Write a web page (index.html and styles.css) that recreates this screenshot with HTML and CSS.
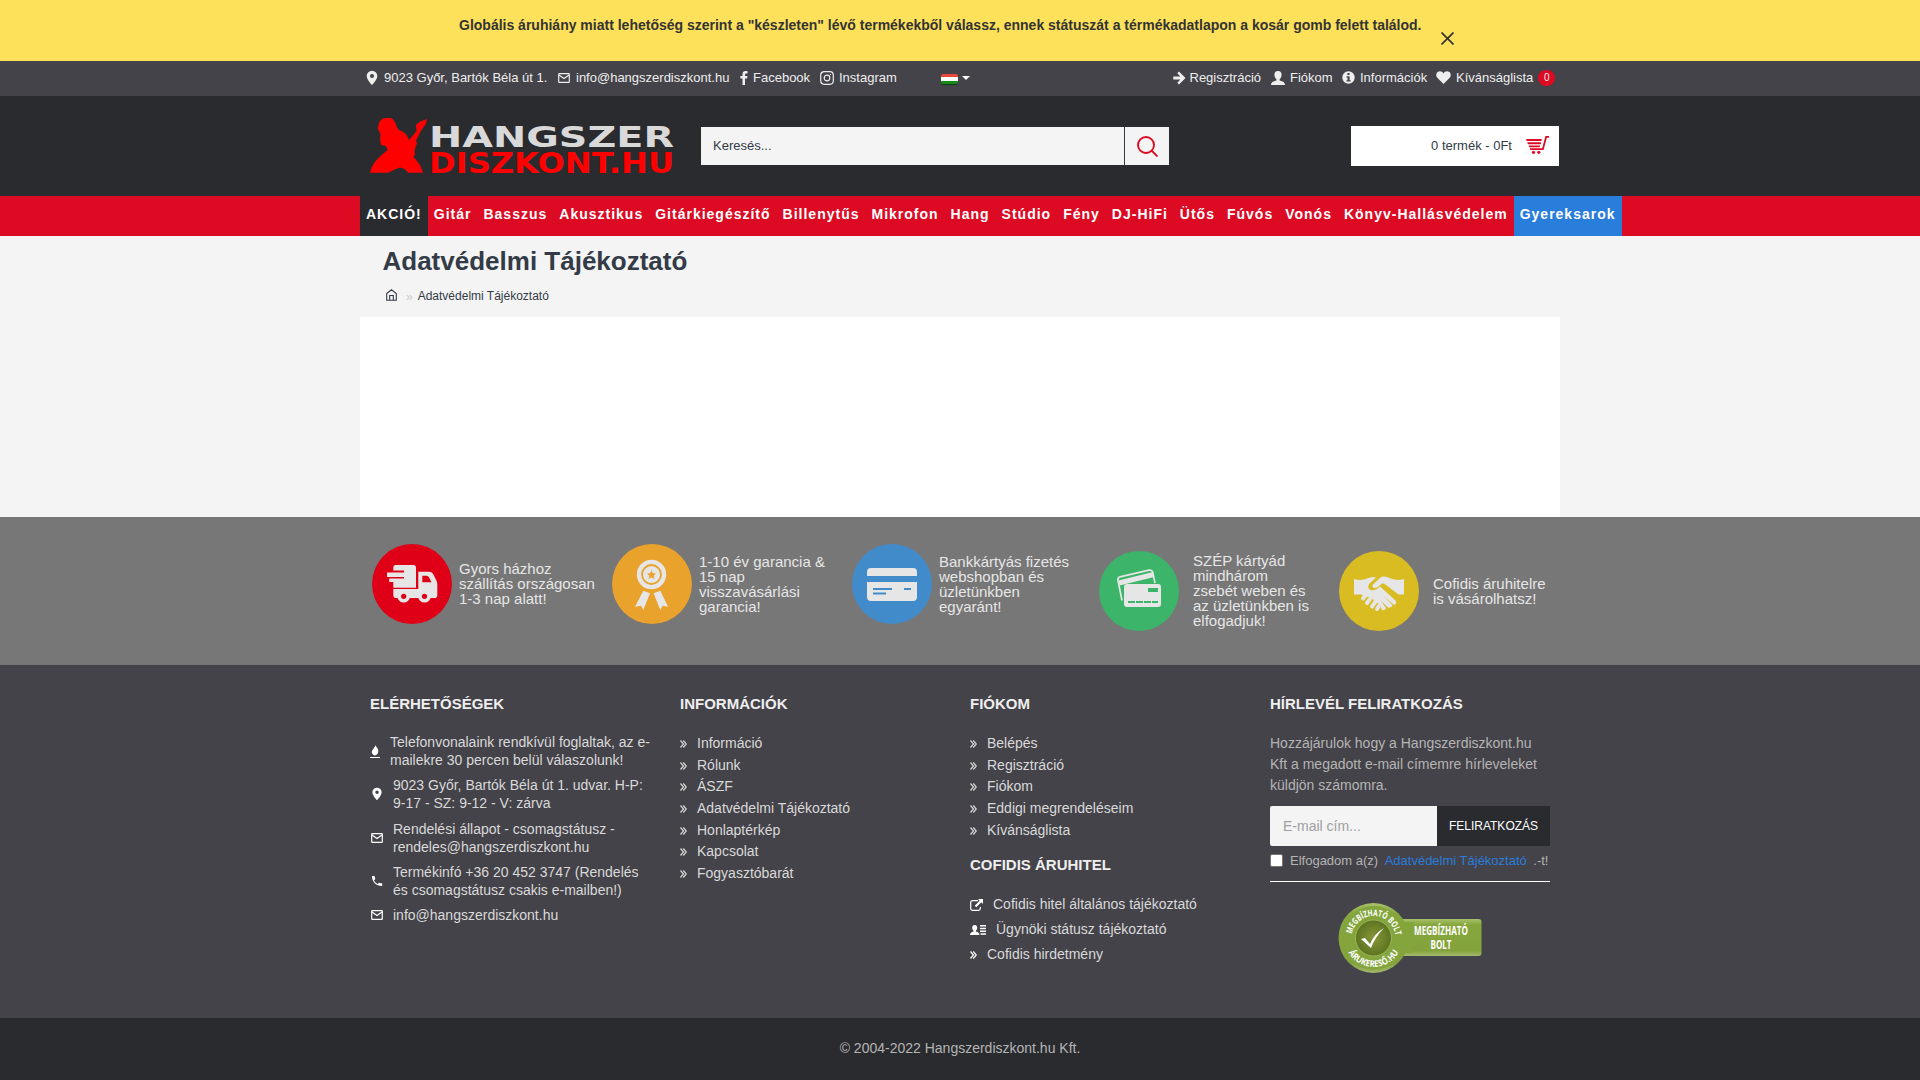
FILE: index.html
```html
<!DOCTYPE html>
<html lang="hu">
<head>
<meta charset="utf-8">
<title>Adatvédelmi Tájékoztató</title>
<link rel="stylesheet" href="styles.css">
</head>
<body>
<svg class="defs" aria-hidden="true">
  <symbol id="pin" viewBox="0 0 12 16"><path fill-rule="evenodd" d="M6 .8a5.300 5.300 0 0 0-5.300 5.300C.7 9.700 6 15.200 6 15.200s5.300-5.500 5.300-9.100A5.300 5.300 0 0 0 6 .8zm0 3.300a2 2 0 1 1 0 4 2 2 0 0 1 0-4z"/></symbol>
  <symbol id="mail" viewBox="0 0 12 10"><rect x=".7" y=".7" width="10.600" height="8.600" rx=".6" fill="none" stroke="currentColor" stroke-width="1.200"/><path d="M1 2l5 3.500L11 2" fill="none" stroke="currentColor" stroke-width="1.200"/></symbol>
  <symbol id="user" viewBox="0 0 16 16"><path d="M8 1c-2.500 0-3.600 1.700-3.600 3.700 0 2.200 1 3.600 2 4.300v1.500C3 11.300 1 12.300 1 15h14c0-2.700-2-3.700-5.400-4.500V9c1-.7 2-2.100 2-4.300C11.600 2.700 10.500 1 8 1z"/></symbol>
  <symbol id="chev" viewBox="0 0 7 8"><path d="M.5.5L3.500 4 .5 7.500M3.300.5L6.300 4l-3 3.500" fill="none" stroke="currentColor" stroke-width="1.200"/></symbol>
</svg>

<div class="notice">
  <strong>Globális áruhiány miatt lehetőség szerint a "készleten" lévő termékekből válassz, ennek státuszát a térmékadatlapon a kosár gomb felett találod.</strong>
  <svg class="close" viewBox="0 0 13 13"><path d="M.5.5l12 12M12.500.5l-12 12" stroke="#333" stroke-width="1.700"/></svg>
</div>

<div class="topbar"><div class="wrap top-row">
  <a class="t-pin"><svg width="12" height="16"><use href="#pin"/></svg>9023 Győr, Bartók Béla út 1.</a>
  <a class="t-mail"><svg width="12" height="10"><use href="#mail"/></svg>info@hangszerdiszkont.hu</a>
  <a class="t-fb"><svg width="8" height="14" viewBox="0 0 8 14"><path d="M7.500.2v2.300H6.200C5.300 2.500 5 3 5 3.700V5h2.400l-.3 2.400H5V14H2.500V7.400H.4V5h2.100V3.300C2.500 1.200 3.800.1 5.600.1c.9 0 1.600 0 1.900.1z"/></svg>Facebook</a>
  <a class="t-ig"><svg class="line" width="14" height="14" viewBox="0 0 14 14" stroke="currentColor" stroke-width="1.200"><rect x=".7" y=".7" width="12.600" height="12.600" rx="3.500"/><circle cx="7" cy="7" r="2.800"/><path d="M10 3.500h1"/></svg>Instagram</a>
  <a class="t-lang"><span class="flag"></span><span class="caret"></span></a>
  <a class="t-reg"><svg width="13" height="14" viewBox="0 0 13 14"><path d="M6 .6L12.500 7 6 13.400 4.300 11.700 7.400 8.500H.3v-3h7.100L4.300 2.300z"/></svg>Regisztráció</a>
  <a class="t-user"><svg width="16" height="16"><use href="#user"/></svg>Fiókom</a>
  <a class="t-info"><svg width="13" height="13" viewBox="0 0 13 13"><circle cx="6.500" cy="6.500" r="6.200"/><path fill="#444349" d="M5.400 2h2.200v2H5.400zM4.500 5.200h3.100v4h1v1.400H4.500V9.200h1V6.500h-1z"/></svg>Információk</a>
  <a class="t-heart"><svg width="15" height="13" viewBox="0 0 15 13"><path d="M7.500 13L1.300 6.800C-.3 5 0 2.200 1.700.9 3.600-.5 6.300.1 7.500 2.400 8.700.1 11.400-.5 13.300.9c1.700 1.300 2 4.100.4 5.900z"/></svg>Kívánságlista<b class="count">0</b></a>
</div></div>

<header class="header"><div class="wrap head-row">
  <svg class="logo" viewBox="0 0 306 66">
    <path fill="#f00" d="M7.700 11.300L9 6q2-4.500 6-5h6q4 2 5.700 8.700l2 3.300 4 1.500 4 3.500 2.600 5 7.400-9.300-1-5.700 4.600-3.500 6.700-2.500-1.200 5-5 7-4.800 9.700 1 2.600-1.500 4-1.200 4.400 1 2.500-2 2.500 2.700 3 4 5.300 3 7.700H38.300l-4-4-4.300-1.300-6 2.300-5.700 3H0q1-6 5-11 5-6 12.700-11.700l-2-4-4.700-1-1-6 .5-5z"/>
    <text x="59" y="29.700" font-size="28" fill="#d9d9d9" textLength="245" lengthAdjust="spacingAndGlyphs">HANGSZER</text>
    <text x="59" y="55.700" font-size="27.500" fill="#f00" textLength="245" lengthAdjust="spacingAndGlyphs">DISZKONT.HU</text>
  </svg>
  <div class="search"><span>Keresés...</span><button><svg class="line" width="21" height="21" viewBox="0 0 21 21" stroke="#dc0a23" stroke-width="1.900"><circle cx="9" cy="9" r="8"/><path d="M14.500 14.500l6 6"/></svg></button></div>
  <div class="cart">0 termék - 0Ft<svg width="23" height="18" viewBox="0 0 23 18"><path d="M23 0v1.700h-2.200L17.600 14H4.300l-.5-1.700h12.400L19.400 0zM0 3h15.800l-.4 2H.7zM1.200 6.300h14l-.5 2H2zM2.600 9.500h11.500l-.4 1.700H3.200z" fill="#dc0a23"/><circle cx="7.500" cy="16.300" r="1.600" fill="#dc0a23"/><circle cx="12.800" cy="16.300" r="1.600" fill="#dc0a23"/></svg></div>
</div></header>

<nav class="nav"><div class="wrap nav-row">
  <a class="dark">AKCIÓ!</a><a>Gitár</a><a>Basszus</a><a>Akusztikus</a><a>Gitárkiegészítő</a><a>Billenytűs</a><a>Mikrofon</a><a>Hang</a><a>Stúdio</a><a>Fény</a><a>DJ-HiFi</a><a>Ütős</a><a>Fúvós</a><a>Vonós</a><a>Könyv-Hallásvédelem</a><a class="blue">Gyereksarok</a>
</div></nav>

<main class="wrap">
  <h1>Adatvédelmi Tájékoztató</h1>
  <div class="crumbs"><svg class="line" width="11" height="12" viewBox="0 0 11 12" stroke="currentColor" stroke-width="1.100"><path d="M.7 4.500L5.500.8l4.800 3.700v6.700H.7zM3.700 11V6.500h3.600V11"/></svg><i>»</i><span>Adatvédelmi Tájékoztató</span></div>
  <div class="content"></div>
</main>

<section class="features"><div class="wrap feat-row">
  <div class="feat"><div class="disc red"><svg viewBox="0 0 80 80"><path d="M21.300 25v-1.500q0-2.500 2.500-2.500h17.500q2.700 0 2.700 2.700v20H21.300V38H17.200v-3.500H32V33H15v-4.500h17V26.500H21.300z"/><path fill-rule="evenodd" d="M46.300 27.700H57q3 0 4.500 3l3 6q.8 1.500.8 3.500v11q0 2.800-2.800 2.800H24q-2.700 0-2.700-2.700V45h25zm4 4v6.600H59.500l-2.500-5q-.8-1.600-2.500-1.600z"/><circle cx="31.700" cy="52.300" r="6.300"/><circle cx="52.500" cy="52.300" r="6.300"/><g fill="#df0018"><circle cx="31.700" cy="52.300" r="2.600"/><circle cx="52.500" cy="52.300" r="2.600"/></g></svg></div><p>Gyors házhoz<br>szállítás országosan<br>1-3 nap alatt!</p></div>
  <div class="feat"><div class="disc orange"><svg viewBox="0 0 80 80"><circle cx="39.500" cy="30.500" r="14.700"/><circle cx="39.500" cy="30.500" r="9.500" fill="none" stroke="#e9a22b" stroke-width="1.800"/><path fill="#e9a22b" d="M39.500 26l1.300 3.200 3.300.3-2.500 2.200.8 3.300-2.900-1.800-2.900 1.800.8-3.300-2.500-2.200 3.300-.3z"/><path d="M31.300 46.700l6.700 2.600L31.300 66 29 61.700l-6 1zM48.300 46.700l-6.700 2.600L48.300 66l2.300-4.300 5.500 1z"/></svg></div><p>1-10 év garancia &amp;<br>15 nap<br>visszavásárlási<br>garancia!</p></div>
  <div class="feat"><div class="disc azure"><svg viewBox="0 0 80 80"><path d="M15 32v-4q0-4 4-4h42q4 0 4 4v4zM15 38h50v15q0 4-4 4H19q-4 0-4-4z"/><path d="M21 45h19M21 49.500h13M52 45h7" stroke="#428bca" stroke-width="2"/></svg></div><p>Bankkártyás fizetés<br>webshopban és<br>üzletünkben<br>egyaránt!</p></div>
  <div class="feat low odd"><div class="disc green"><svg viewBox="0 0 80 80"><path d="M23 49.500l-4-20q-.5-3 2-3.700l29-6.600q3-.6 3.700 2l2.300 11" fill="none" stroke="#e6e6e6" stroke-width="1.700"/><path d="M19.500 29.500l34.500-8.500 1.200 5-34.500 8.500z"/><rect x="25" y="33" width="37" height="23" rx="3"/><path fill="#3cb469" d="M49 37h10v4H49z"/><path d="M29 51h30" stroke="#3cb469" stroke-width="2" stroke-dasharray="7 1"/></svg></div><p>SZÉP kártyád<br>mindhárom<br>zsebét weben és<br>az üzletünkben is<br>elfogadjuk!</p></div>
  <div class="feat low"><div class="disc yellow"><svg viewBox="0 0 80 80"><path d="M15 28q8 2.500 16-1.500 3-1 6 0l-6.500 6q-3 4 1 6.500 4 1.500 9.500-3.500l15.500 14q2 3-1.500 4.500L44.500 45l9 9q-1 3.500-4.500 2.500l-7-6.500 5 7q-1 3-4 2-2.500-7-8-9-3-5-8-4l-5-2.500h-7z"/><path d="M65 28q-8 2.500-16-1.500-5-2-8 .5l-7.500 7q-.5 3 2 3 3 0 7.500-4.500h2L59.500 43.500H65z"/><path d="M26 45l-2 2.500M31 48l-3 4M36 51.500l-3 4M40 55l-2 3" stroke="#e6e6e6" stroke-width="4" stroke-linecap="round"/></svg></div><p>Cofidis áruhitelre<br>is vásárolhatsz!</p></div>
</div></section>

<footer class="footer"><div class="wrap foot-row">
  <section class="contact">
    <h3>ELÉRHETŐSÉGEK</h3>
    <a class="first"><svg width="10" height="13" viewBox="0 0 10 13"><path d="M5.500 0c.3 2 2.800 3 2.800 6S6.500 10 5 10.500C3 10 1.500 8.500 1.800 6.500 2 5 4 4 4 2.500c.8 0 1-.9 1.500-2.500zM0 12h10v1H0z"/></svg><span>Telefonvonalaink rendkívül foglaltak, az e-<br>mailekre 30 percen belül válaszolunk!</span></a>
    <a><svg width="12" height="14"><use href="#pin"/></svg><span>9023 Győr, Bartók Béla út 1. udvar. H-P:<br>9-17 - SZ: 9-12 - V: zárva</span></a>
    <a><svg width="12" height="10"><use href="#mail"/></svg><span>Rendelési állapot - csomagstátusz -<br>rendeles@hangszerdiszkont.hu</span></a>
    <a><svg width="12" height="12" viewBox="0 0 12 12"><path d="M1 1h2.500L4.300 4 3 5.300c.8 1.800 1.900 2.900 3.800 3.800L8 7.800l3.200.8V11C5 11 1 7 1 1z"/></svg><span>Termékinfó +36 20 452 3747 (Rendelés<br>és csomagstátusz csakis e-mailben!)</span></a>
    <a><svg width="12" height="10"><use href="#mail"/></svg><span>info@hangszerdiszkont.hu</span></a>
  </section>
  <section class="links">
    <h3>INFORMÁCIÓK</h3>
    <a><svg><use href="#chev"/></svg>Információ</a><a><svg><use href="#chev"/></svg>Rólunk</a><a><svg><use href="#chev"/></svg>ÁSZF</a><a><svg><use href="#chev"/></svg>Adatvédelmi Tájékoztató</a><a><svg><use href="#chev"/></svg>Honlaptérkép</a><a><svg><use href="#chev"/></svg>Kapcsolat</a><a><svg><use href="#chev"/></svg>Fogyasztóbarát</a>
  </section>
  <section class="links account">
    <h3>FIÓKOM</h3>
    <a><svg><use href="#chev"/></svg>Belépés</a><a><svg><use href="#chev"/></svg>Regisztráció</a><a><svg><use href="#chev"/></svg>Fiókom</a><a><svg><use href="#chev"/></svg>Eddigi megrendeléseim</a><a><svg><use href="#chev"/></svg>Kívánságlista</a>
    <h3 class="second">COFIDIS ÁRUHITEL</h3>
    <div class="cofidis">
      <a><svg class="i13" viewBox="0 0 13 12"><path d="M8 1.700H2.500Q.7 1.700.7 3.500v6q0 1.800 1.800 1.800h6q1.800 0 1.800-1.800V8" fill="none" stroke="currentColor" stroke-width="1.200"/><path d="M8 0h5v5l-1.700-1.700-5 5L4.700 6.700l5-5z"/></svg>Cofidis hitel általános tájékoztató</a>
      <a><svg class="i16" viewBox="0 0 16 10"><path d="M4.700 0C3 0 2.200 1.200 2.200 2.700c0 1.400.7 2.400 1.300 2.900v1C1.500 7.200 0 8 0 10h9.400c0-2-1.500-2.800-3.500-3.400v-1c.6-.5 1.300-1.500 1.300-2.900C7.200 1.200 6.400 0 4.700 0zM10 0h6v1.600h-6zM10 2.800h6v1.500h-6zM10 5.500h6V7h-6zM10.500 8.300H16v1.500h-5.500z"/></svg>Ügynöki státusz tájékoztató</a>
      <a><svg><use href="#chev"/></svg>Cofidis hirdetmény</a>
    </div>
  </section>
  <section class="news">
    <h3>HÍRLEVÉL FELIRATKOZÁS</h3>
    <p>Hozzájárulok hogy a Hangszerdiszkont.hu<br>Kft a megadott e-mail címemre hírleveleket<br>küldjön számomra.</p>
    <div class="subscribe"><span>E-mail cím...</span><button>FELIRATKOZÁS</button></div>
    <div class="agree"><i class="box"></i><span>Elfogadom a(z)</span><a>Adatvédelmi Tájékoztató</a><span>.-t!</span></div>
    <svg class="badge" viewBox="0 0 144 72">
      <defs>
        <linearGradient id="gr" x1="0" y1="0" x2="0" y2="1"><stop offset="0" stop-color="#a9c16b"/><stop offset=".15" stop-color="#86a73d"/><stop offset=".85" stop-color="#83a23c"/><stop offset="1" stop-color="#a3b96c"/></linearGradient>
        <radialGradient id="core"><stop offset="0" stop-color="#879638"/><stop offset="1" stop-color="#5c7420"/></radialGradient>
        <path id="arcTop" d="M13.500 36a22 22 0 0 1 44 0"/>
        <path id="arcBottom" d="M6.500 36a29 29 0 0 0 58 0"/>
      </defs>
      <rect x="55" y="17" width="88.500" height="37" rx="3" fill="url(#gr)"/>
      <circle cx="35.500" cy="36" r="35" fill="url(#gr)"/>
      <path d="M55 20h20v31H55z" fill="#84a43c"/>
      <circle cx="35.500" cy="36" r="32" fill="#84a43c"/>
      <circle cx="35.500" cy="36" r="18" fill="url(#core)" stroke="#a6bd66" stroke-width=".8"/>
      <path d="M23 37l4-1 5 6q5-11 14-16-9 9-13 20z" fill="#fff"/>
      <text font-size="9"><textPath href="#arcTop" startOffset="4" textLength="62" lengthAdjust="spacingAndGlyphs">MEGBÍZHATÓ BOLT</textPath></text>
      <text font-size="9"><textPath href="#arcBottom" startOffset="15" textLength="61" lengthAdjust="spacingAndGlyphs">ÁRUKERESŐ.HU</textPath></text>
      <text x="76" y="32.500" font-size="12.500" textLength="54" lengthAdjust="spacingAndGlyphs">MEGBÍZHATÓ</text>
      <text x="92.500" y="47" font-size="12.500" textLength="21" lengthAdjust="spacingAndGlyphs">BOLT</text>
    </svg>
  </section>
</div></footer>
<div class="copyright">© 2004-2022 Hangszerdiszkont.hu Kft.</div>
</body>
</html>
```
FILE: styles.css
```css
* { box-sizing: border-box; }
body { margin: 0; background: #f4f4f4; color: #333b47; font: 14px/18px "Liberation Sans", Arial, sans-serif; height: 1080px; overflow: hidden; white-space: nowrap; }
h1, h3, p { margin: 0; }
svg { flex: none; fill: currentColor; }
svg.line { fill: none; }
button { border: 0; padding: 0; font: inherit; }
.defs { display: none; }
.wrap { width: 1200px; margin: 0 auto; }

.notice { height: 61px; background: #fee15b; color: #333; display: flex; padding: 16px 0 0 459px; }
.notice .close { width: 13px; height: 13px; margin: 16px 0 0 19px; }

.topbar { height: 35px; background: #444349; color: #eee; font-size: 13px; }
.top-row { display: flex; height: 33px; padding-left: 6px; }
.top-row a { display: flex; align-items: center; }
.t-pin { width: 192px; gap: 6px; }
.t-mail { width: 182px; gap: 6px; }
.t-fb { width: 80px; gap: 5px; }
.t-ig { width: 121px; gap: 5px; }
.t-lang { width: 231.500px; gap: 4px; }
.flag { width: 17px; height: 10px; border-radius: 2px; background: linear-gradient(#e8483c 0 33%, #fff 33% 67%, #188a1c 67%); box-shadow: 0 1px 1px #063d0c; margin-top: 2px; }
.caret { border: 4px solid transparent; border-top-color: #fff; border-bottom: 0; margin-top: 1px; }
.t-reg { width: 97.500px; gap: 4px; }
.t-user { width: 72px; gap: 4px; }
.t-info { width: 94px; gap: 5px; }
.t-heart { gap: 5px; }
.count { width: 17px; height: 16px; border-radius: 8px; background: #dc0a23; font: 10px/15px "Liberation Sans", Arial, sans-serif; text-align: center; }

.header { height: 100px; background: #2a2b2f; }
.head-row { display: flex; padding-left: 10px; }
.logo { width: 306px; height: 66px; margin: 21px 25px 0 0; }
.logo text { font-family: "DejaVu Sans", sans-serif; font-weight: bold; }
.search { display: flex; margin-top: 31px; width: 468px; height: 38px; background: #f4f4f4; font-size: 13px; line-height: 37px; }
.search span { flex: 1; padding-left: 12px; }
.search button { width: 45px; background: #f4f4f4; border-left: 1px solid #333b47; display: flex; align-items: center; justify-content: center; }
.cart { width: 208px; height: 40px; margin: 30px 0 0 182px; background: #fff; font-size: 13px; display: flex; align-items: center; justify-content: flex-end; gap: 14px; padding-right: 10px; }
.cart svg { margin-top: -3px; }

.nav { height: 40px; background: #dc0a23; }
.nav-row { display: flex; color: #fff; font-weight: bold; letter-spacing: 1px; line-height: 36px; }
.nav a { flex: none; height: 40px; padding: 0 6px; }
.nav .dark { background: #2a2b2f; }
.nav .blue { background: #297ddb; }

h1 { font-size: 26px; line-height: 50px; height: 50px; padding-left: 22.500px; }
.crumbs { display: flex; height: 31px; padding-left: 26px; font-size: 12px; line-height: 20px; }
.crumbs svg { margin-top: 3px; }
.crumbs i { font-style: normal; color: #ccc; margin: 1px 5px 0 9px; }
.content { height: 200px; background: #fff; }

.features { height: 148px; background: #777; color: #e6e6e6; font-size: 15px; line-height: 15px; }
.feat-row { display: flex; }
.feat { width: 240px; height: 80px; margin-top: 27px; padding-left: 12px; display: flex; align-items: center; gap: 7px; }
.feat:first-child p, .feat.odd p { margin-top: -1px; }
.feat.low { margin-top: 34px; padding-left: 19px; gap: 14px; }
.disc { width: 80px; height: 80px; border-radius: 50%; flex: none; }
.red { background: #df0018; }
.orange { background: #e9a22b; }
.azure { background: #428bca; }
.green { background: #3cb469; }
.yellow { background: #d9bb22; }

.footer { height: 353px; background: #444349; color: #d9d9d9; }
.foot-row { display: flex; padding: 30px 10px 0; }
h3 { font-size: 15px; line-height: 18px; color: #eee; }
.contact { width: 310px; }
.contact h3 { margin-bottom: 20px; }
.contact a { display: flex; align-items: center; gap: 10px; padding-left: 1px; margin-bottom: 7.300px; }
.contact a.first { padding-left: 0; }
.contact svg, .cofidis svg { color: #fff; }
.links { width: 290px; }
.links h3 { margin-bottom: 19.250px; }
.links a { display: flex; align-items: center; gap: 10px; height: 21.670px; }
.links svg { width: 7px; height: 8px; margin-top: 2px; }
.account { width: 300px; }
.links .second { margin: 15.400px 0 18px; }
.cofidis a { height: 25px; }
.cofidis .i13 { width: 13px; height: 12px; }
.cofidis .i16 { width: 16px; height: 10px; }
.news { width: 280px; color: #b4b4b4; }
.news p { line-height: 21px; margin: 20px 0 10px; }
.subscribe { display: flex; height: 40px; background: #f4f4f4; border-radius: 2px; line-height: 40px; }
.subscribe span { flex: 1; padding-left: 13px; color: #a0a0a0; }
.subscribe button { width: 113px; background: #2a2b2f; color: #fff; font-size: 12px; line-height: 38px; }
.agree { display: flex; align-items: center; height: 36px; padding-bottom: 6px; font-size: 13px; border-bottom: 1px solid #fff; }
.agree a { color: #297ddb; margin: 0 6.500px; }
.box { width: 13px; height: 13px; border-radius: 2px; background: #fff; border: 1px solid #767676; margin-right: 7px; }
.badge { display: block; width: 144px; height: 72px; margin: 20px 0 0 67.500px; overflow: visible; }
.badge text { font-family: "Open Sans", sans-serif; font-weight: bold; fill: #fff; }

.copyright { height: 62px; background: #2a2b2f; color: #b4b4b4; text-align: center; line-height: 60px; }
```
